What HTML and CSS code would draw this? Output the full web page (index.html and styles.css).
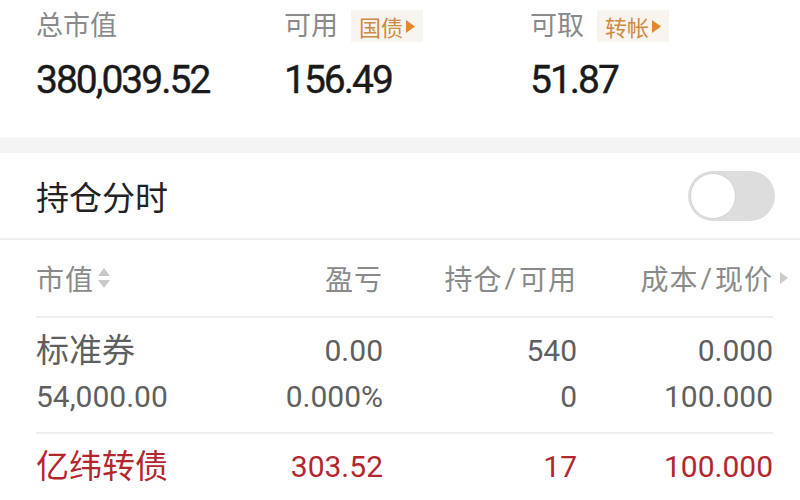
FILE: index.html
```html
<!DOCTYPE html>
<html lang="zh-CN">
<head>
<meta charset="utf-8">
<title>持仓</title>
<link rel="stylesheet" href="styles.css">
</head>
<body>
<section class="summary">
  <div class="stat">
    <div class="stat-head"><span class="stat-label">总市值</span></div>
    <div class="stat-value">380,039.52</div>
  </div>
  <div class="stat">
    <div class="stat-head"><span class="stat-label">可用</span><span class="tag">国债<svg class="tag-arrow" width="9" height="13" viewBox="0 0 9 13"><path d="M0 0 L9 6.5 L0 13 Z"/></svg></span></div>
    <div class="stat-value">156.49</div>
  </div>
  <div class="stat">
    <div class="stat-head"><span class="stat-label">可取</span><span class="tag">转帐<svg class="tag-arrow" width="9" height="13" viewBox="0 0 9 13"><path d="M0 0 L9 6.5 L0 13 Z"/></svg></span></div>
    <div class="stat-value">51.87</div>
  </div>
</section>
<div class="band"></div>
<section class="title-row">
  <h2 class="title">持仓分时</h2>
  <div class="toggle"><span class="knob"></span></div>
</section>
<section class="table">
  <div class="row head">
    <div class="cell left">市值<svg class="sort" width="14" height="24" viewBox="0 0 14 24"><path d="M7 2 L13 10 H1 Z"/><path d="M7 22 L13 14 H1 Z"/></svg></div>
    <div class="cell">盈亏</div>
    <div class="cell">持仓<span class="sl">/</span>可用</div>
    <div class="cell">成本<span class="sl">/</span>现价<svg class="more" width="8" height="12" viewBox="0 0 8 12"><path d="M0 0 L8 6 L0 12 Z"/></svg></div>
  </div>
  <div class="row data">
    <div class="cell left"><div class="name">标准券</div><div>54,000.00</div></div>
    <div class="cell"><div>0.00</div><div>0.000%</div></div>
    <div class="cell"><div>540</div><div>0</div></div>
    <div class="cell"><div>0.000</div><div>100.000</div></div>
  </div>
  <div class="row data red">
    <div class="cell left"><div class="name">亿纬转债</div><div>2,003.52</div></div>
    <div class="cell"><div>303.52</div><div>17.854%</div></div>
    <div class="cell"><div>17</div><div>17</div></div>
    <div class="cell"><div>100.000</div><div>117.854</div></div>
  </div>
</section>
</body>
</html>
```

FILE: styles.css
```css
html, body {
  margin: 0;
  padding: 0;
  background: #ffffff;
}
body {
  width: 800px;
  height: 500px;
  overflow: hidden;
  font-family: Roboto, "Noto Sans CJK SC", sans-serif;
  color: #222222;
}

.summary {
  height: 137px;
  box-sizing: border-box;
  padding: 10px 0 0 36px;
  display: grid;
  grid-template-columns: 248px 246px 1fr;
}
.stat-head {
  height: 32px;
  display: flex;
  align-items: center;
  gap: 13px;
}
.stat-label {
  font-size: 27px;
  line-height: 32px;
  color: #8a8a8a;
}
.tag {
  height: 32px;
  display: flex;
  align-items: center;
  gap: 3px;
  padding: 0 8px;
  background: #f8f5f0;
  color: #cf8a42;
  font-size: 22px;
}
.tag-arrow path { fill: #e3882c; }
.stat-value {
  margin-top: 16px;
  font-size: 39px;
  line-height: 44px;
  font-weight: 400;
  letter-spacing: -2px;
  color: #1a1a1a;
  -webkit-text-stroke: 0.4px #1a1a1a;
}

.band {
  height: 16px;
  background: #f4f4f4;
  border-top: 1px solid #f9f9f9;
  box-sizing: border-box;
}

.title-row {
  height: 87px;
  box-sizing: border-box;
  display: flex;
  align-items: center;
  justify-content: space-between;
  padding: 0 25px 0 36px;
  border-bottom: 2px solid #eeeeee;
}
.title {
  margin: 0;
  font-size: 33px;
  font-weight: 400;
  color: #222222;
}
.toggle {
  width: 87px;
  height: 50px;
  box-sizing: border-box;
  border-radius: 25px;
  background: #dddddd;
  padding: 2px;
  display: flex;
  align-items: center;
}
.knob {
  width: 46px;
  height: 46px;
  box-sizing: border-box;
  border-radius: 50%;
  background: #ffffff;
  border: 1px solid #d4d4d4;
}

.table {
  padding: 0 27px 0 36px;
}
.row {
  display: grid;
  grid-template-columns: 160px 187px 194px 196px;
  border-bottom: 2px solid #eeeeee;
}
.cell {
  text-align: right;
}
.cell.left {
  text-align: left;
}
.head {
  height: 76px;
  align-items: center;
  font-size: 28px;
  letter-spacing: 1px;
  color: #8a8a8a;
}
.head .cell {
  display: flex;
  align-items: center;
  justify-content: flex-end;
}
.head .cell.left {
  justify-content: flex-start;
}
.sl {
  margin: 0 2px;
}
.sort {
  margin-left: 3px;
}
.sort path { fill: #c9c9c9; }
.more {
  width: 8px;
  margin-left: 7px;
  margin-right: -15px;
}
.more path { fill: #cccccc; }

.data {
  padding: 10px 0 12px;
  font-size: 30px;
  line-height: 46px;
  color: #5f5f5f;
}
.name {
  font-size: 33px;
}
.data.red {
  color: #b3262e;
}
```
